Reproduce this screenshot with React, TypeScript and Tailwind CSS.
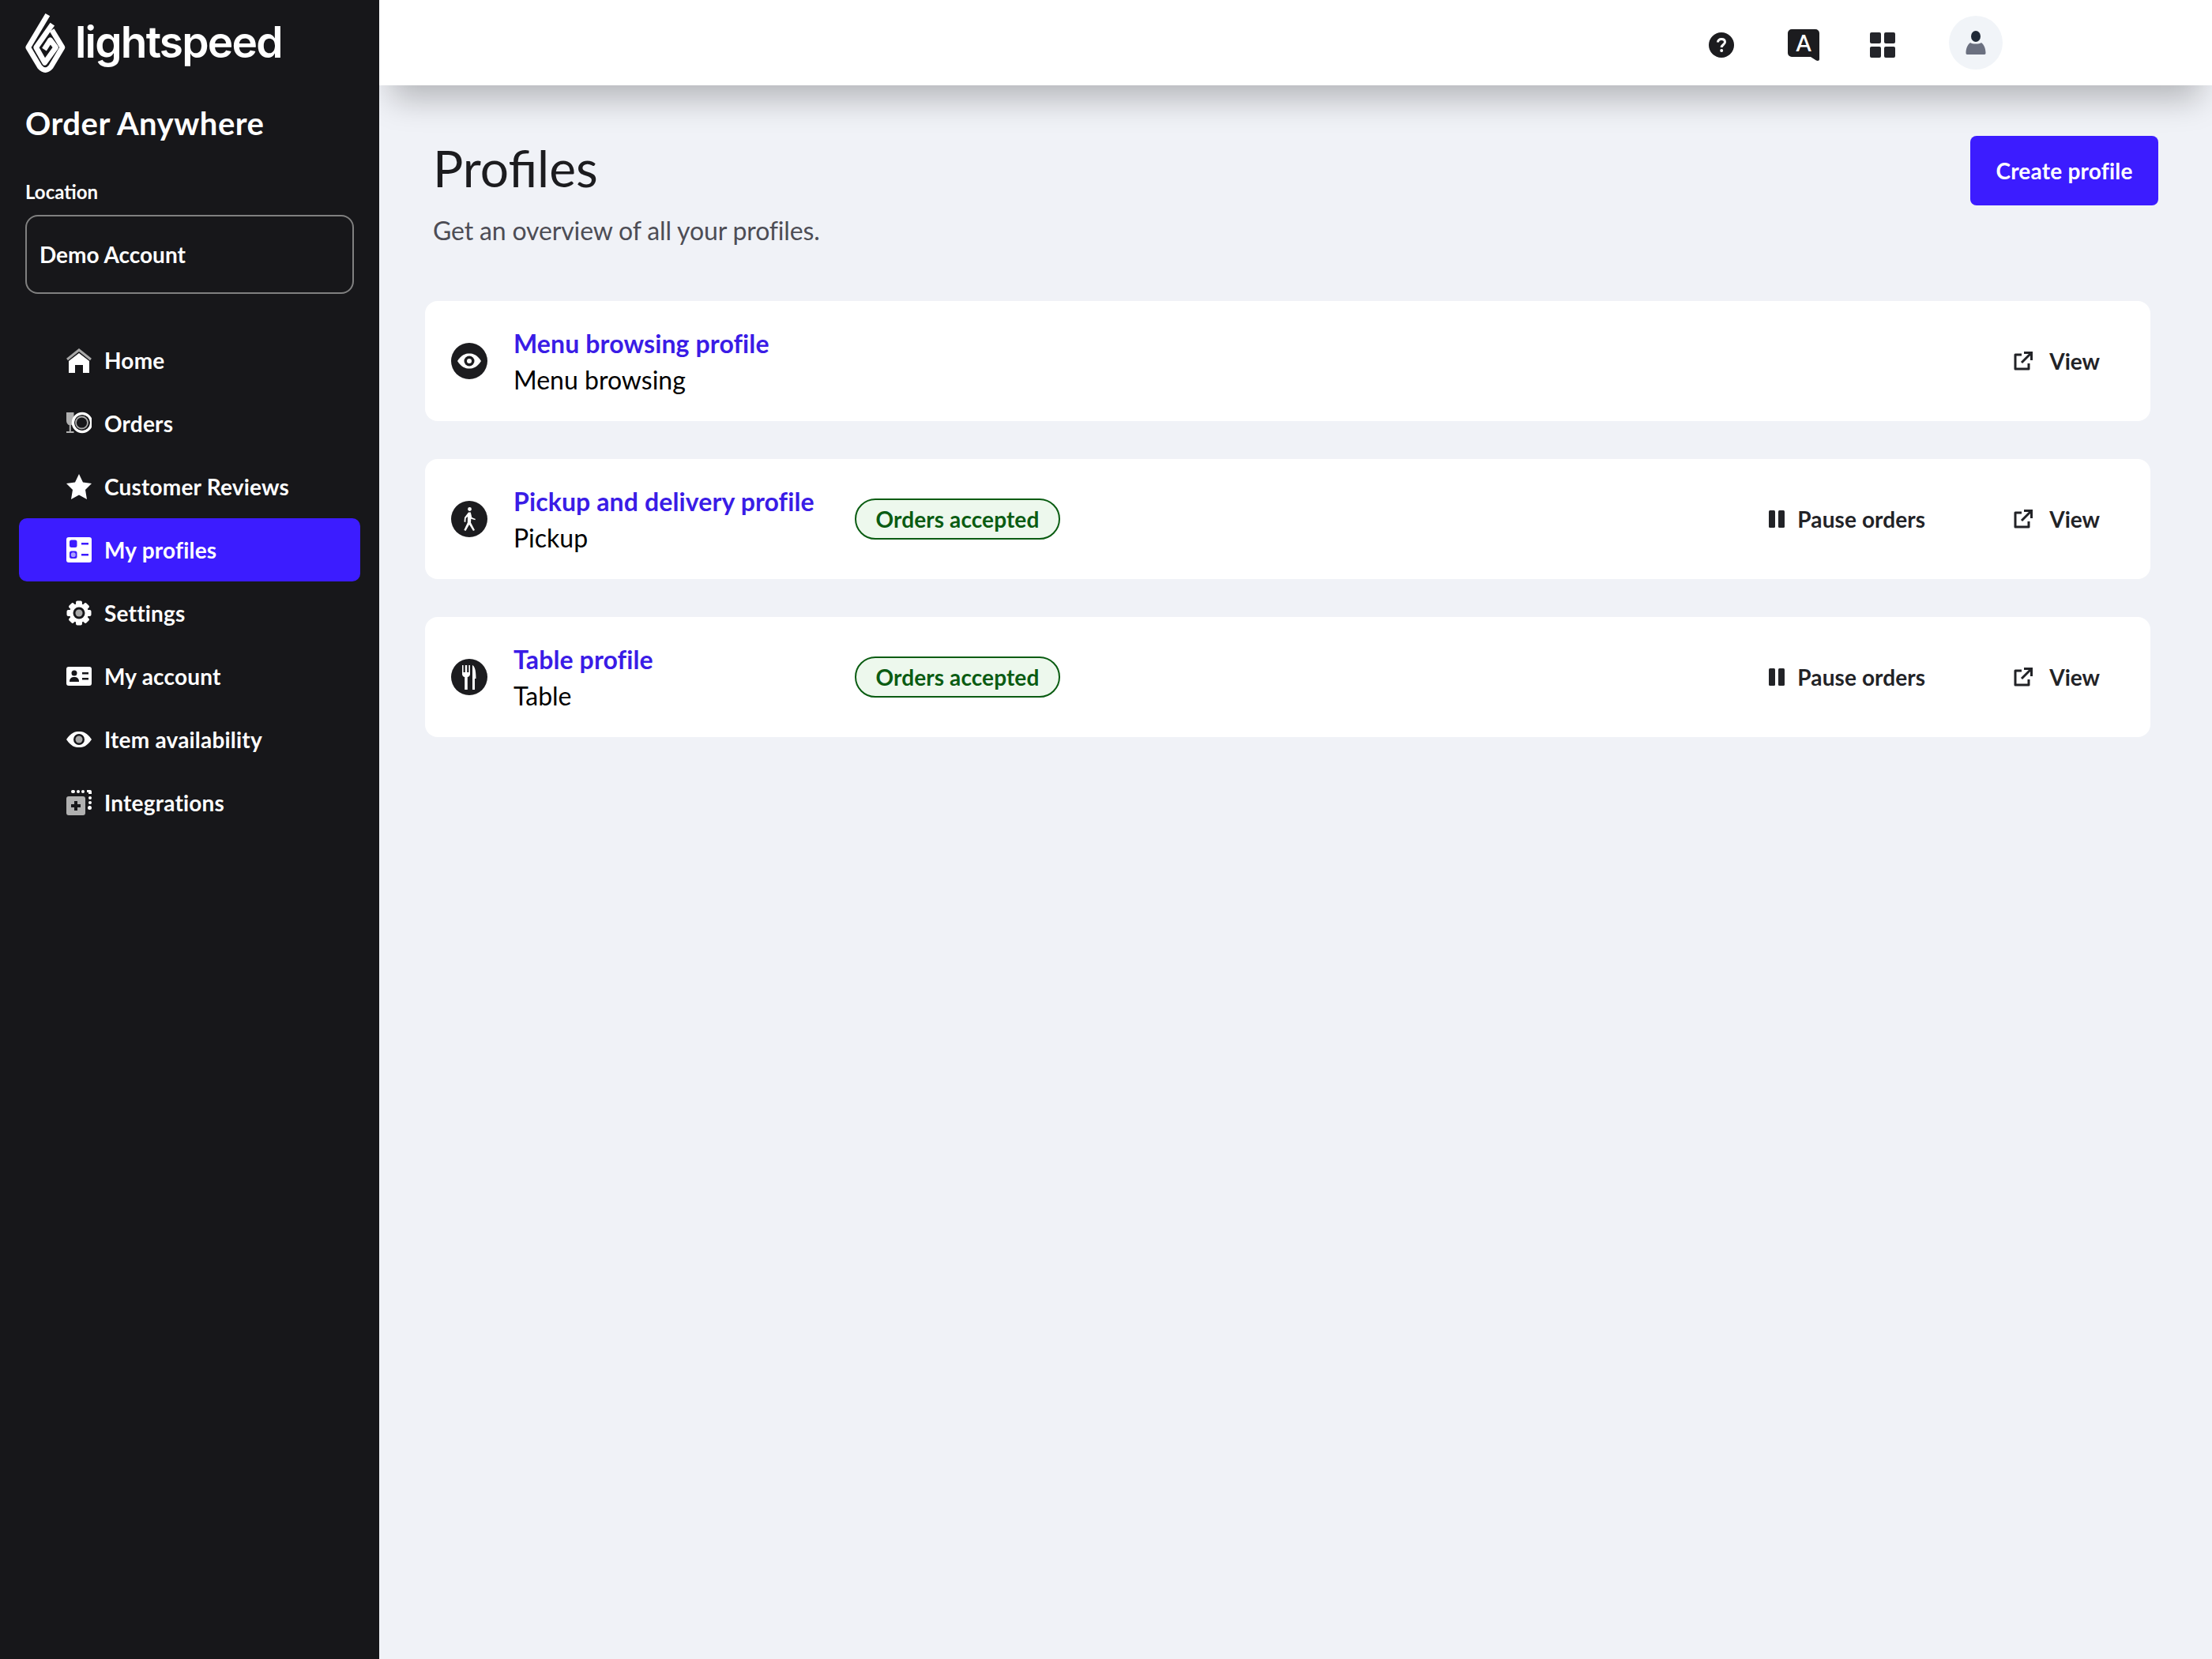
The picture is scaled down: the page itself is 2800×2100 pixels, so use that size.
import React from "react";

const Lato = "font-['Lato',sans-serif]";

function Logo() {
  return (
    <svg width="70" height="90" viewBox="0 0 210 270" className="shrink-0">
      <g fill="none" stroke="#fff" strokeWidth="20" strokeLinejoin="round" strokeLinecap="butt">
        <path d="M106 26 L32 150 L76 224 Q97 248 118 224 L162 150 L122 84" />
        <path d="M124 62 L62 150 L95 208 L137 150 L116 122 L93 158" />
      </g>
    </svg>
  );
}

function HomeIcon() {
  return (
    <svg width="32" height="32" viewBox="0 0 32 32">
      <path d="M1 15 L16 3 L31 15" fill="none" stroke="#a8a8a8" strokeWidth="3" />
      <path d="M16 7 L29 17 V32 H21 V22 H11 V32 H3 V17 Z" fill="#fff" />
    </svg>
  );
}
function OrdersIcon() {
  return (
    <svg width="32" height="32" viewBox="0 0 32 32">
      <path d="M0 2 H9.5 V12 C9.5 16 7 18 5.8 18 V26 H9.5 V28 H0 V26 H3.8 V18 C2.5 18 0 16 0 12 Z" fill="#b0b0b0" />
      <circle cx="20" cy="15" r="11.5" fill="none" stroke="#fff" strokeWidth="3.5" />
      <circle cx="20" cy="15" r="9.8" fill="#17171a" />
      <circle cx="19.5" cy="15" r="7.5" fill="#17171a" stroke="#a8a8a8" strokeWidth="1.8" />
    </svg>
  );
}
function StarIcon() {
  return (
    <svg width="32" height="32" viewBox="0 0 32 32">
      <path d="M16 0 L21 10.5 L32 12 L24 20 L26 32 L16 26.5 L6 32 L8 20 L0 12 L11 10.5 Z" fill="#fff" strokeLinejoin="round" />
    </svg>
  );
}
function ProfilesIcon() {
  return (
    <svg width="32" height="32" viewBox="0 0 32 32">
      <rect width="32" height="32" rx="3" fill="#fff" />
      <rect x="4" y="3.5" width="9.5" height="9.5" rx="2.5" fill="#3c1cff" />
      <rect x="4" y="17.5" width="9.5" height="9.5" rx="2.5" fill="#3c1cff" />
      <circle cx="8.75" cy="22.25" r="3" fill="#a9a0ff" />
      <rect x="19" y="7" width="9" height="2.5" fill="#3c1cff" />
      <rect x="19" y="21" width="9" height="2.5" fill="#3c1cff" />
    </svg>
  );
}
function GearIcon() {
  const rot = [0, 45, 90, 135];
  return (
    <svg width="32" height="32" viewBox="0 0 32 32">
      {rot.map((r) => (
        <rect key={r} x="12" y="0.5" width="8" height="31" rx="2" fill="#fff" transform={`rotate(${r} 16 16)`} />
      ))}
      <circle cx="16" cy="16" r="12" fill="#fff" />
      <circle cx="16" cy="16" r="7.5" fill="#17171a" />
      <circle cx="16" cy="16" r="4.5" fill="#a8a8a8" />
    </svg>
  );
}
function AccountIcon() {
  return (
    <svg width="32" height="32" viewBox="0 0 32 32">
      <rect x="0" y="4" width="32" height="24" rx="3" fill="#fff" />
      <circle cx="10" cy="12" r="3.5" fill="#17171a" />
      <path d="M4 23 C4 18 7 17 10 17 C13 17 16 18 16 23 Z" fill="#17171a" />
      <rect x="20" y="11" width="8" height="2.5" fill="#17171a" />
      <rect x="20" y="18" width="8" height="2.5" fill="#17171a" />
    </svg>
  );
}
function EyeIcon() {
  return (
    <svg width="32" height="32" viewBox="0 0 32 32">
      <path d="M0 16 C6 7 11 6 16 6 C21 6 26 7 32 16 C26 25 21 26 16 26 C11 26 6 25 0 16 Z" fill="#fff" />
      <circle cx="16" cy="16" r="7" fill="#17171a" />
      <circle cx="16" cy="16" r="4.5" fill="#a8a8a8" />
    </svg>
  );
}
function IntegrationsIcon() {
  return (
    <svg width="32" height="32" viewBox="0 0 32 32">
      <rect x="0" y="8" width="24" height="24" rx="3" fill="#b0b0b0" />
      <path d="M10 14 H14 V18 H18 V22 H14 V26 H10 V22 H6 V18 H10 Z" fill="#17171a" />
      <g fill="#fff">
        <rect x="6" y="0" width="5" height="4" rx="2" />
        <rect x="13" y="0" width="4" height="4" rx="2" />
        <rect x="19" y="0" width="4" height="4" rx="2" />
        <path d="M26 0 H30 A2 2 0 0 1 32 2 V5 H28 V3 H26 Z" />
        <rect x="28" y="8" width="4" height="4" rx="2" />
        <rect x="28" y="14" width="4" height="4" rx="2" />
        <rect x="27" y="20" width="5" height="5" rx="2.5" />
      </g>
    </svg>
  );
}

function Question() {
  return (
    <svg width="32" height="32" viewBox="0 0 32 32">
      <circle cx="16" cy="16" r="16" fill="#1c1c1f" />
      <path d="M11.5 12.5 C11.5 10 13.5 8.5 16 8.5 C18.7 8.5 20.5 10 20.5 12.3 C20.5 15.5 16.2 15.5 16.2 19" fill="none" stroke="#fff" strokeWidth="3" />
      <circle cx="16.2" cy="23" r="2" fill="#fff" />
    </svg>
  );
}
function LangIcon() {
  return (
    <div className="relative w-[40px] h-[40px]">
      <svg width="40" height="40" viewBox="0 0 40 40" className="absolute inset-0">
        <path d="M5 0 H35 A5 5 0 0 1 40 5 V38 C40 40 38 40.5 36 39.5 L29 35 H5 A5 5 0 0 1 0 30 V5 A5 5 0 0 1 5 0 Z" fill="#1c1c1f" />
      </svg>
      <span className={`absolute inset-x-0 top-[-1px] text-center text-[28px] leading-[36px] font-semibold text-white ${Lato}`}>A</span>
    </div>
  );
}
function Grid4() {
  return (
    <div className="grid grid-cols-2 grid-rows-2 gap-[4px] w-[32px] h-[32px]">
      <div className="bg-[#24252a] rounded-[2px]" />
      <div className="bg-[#24252a] rounded-[2px]" />
      <div className="bg-[#24252a] rounded-[2px]" />
      <div className="bg-[#24252a] rounded-[2px]" />
    </div>
  );
}
function Person() {
  return (
    <svg width="26" height="30" viewBox="0 0 26 30">
      <ellipse cx="13" cy="7" rx="6" ry="7" fill="#1f2937" />
      <path d="M6 15 C9 17 17 17 20 15 C23 17 25.5 22 25.5 28 C25.5 29 25 30 24 30 H2 C1 30 0.5 29 0.5 28 C0.5 22 3 17 6 15 Z" fill="#6b7080" />
    </svg>
  );
}

function RoundWalk() {
  return (
    <svg width="46" height="46" viewBox="0 0 46 46">
      <circle cx="23" cy="23" r="23" fill="#1c1c1f" />
      <circle cx="23.5" cy="10.5" r="2.4" fill="#fff" />
      <path d="M22 14.5 H24.8 L26.3 21 L31 23 L30.3 24.3 L25.3 22.8 L25 27.5 L30 37 L28 38 L23 30 L18.5 38 L16.3 37 L20.8 27.5 L21 20 L18.7 22 L18.3 27 L16.5 26.5 L17 21 Z" fill="#fff" />
    </svg>
  );
}
function RoundEye() {
  return (
    <svg width="46" height="46" viewBox="0 0 46 46">
      <circle cx="23" cy="23" r="23" fill="#1c1c1f" />
      <path d="M8 23 C13 15 18 13.5 23 13.5 C28 13.5 33 15 38 23 C33 31 28 32.5 23 32.5 C18 32.5 13 31 8 23 Z" fill="#fff" />
      <circle cx="23" cy="23" r="6.5" fill="#1c1c1f" />
      <circle cx="23" cy="23" r="3" fill="#fff" />
    </svg>
  );
}
function RoundFork() {
  return (
    <svg width="46" height="46" viewBox="0 0 46 46">
      <circle cx="23" cy="23" r="23" fill="#1c1c1f" />
      <path d="M14 8 H15.6 V17 H17.8 V8 H20.2 V17 H22.4 V8 H24 V19 C24 22 21.5 23 20.8 23 V39 H17.2 V23 C16.5 23 14 22 14 19 Z" fill="#fff" />
      <path d="M27 8 C29.5 9 31.5 13 31.5 25 H30 V39 H27 Z" fill="#fff" />
    </svg>
  );
}

function PauseIcon() {
  return (
    <svg width="20" height="22" viewBox="0 0 20 22" className="shrink-0">
      <rect x="0" y="0" width="8" height="22" rx="1.5" fill="#222327" />
      <rect x="12" y="0" width="8" height="22" rx="1.5" fill="#222327" />
    </svg>
  );
}
function ExternalIcon() {
  return (
    <svg width="24" height="24" viewBox="0 0 24 24" className="shrink-0" fill="none" stroke="#222327" strokeWidth="3">
      <path d="M10 4 H2 V22 H19 V15" strokeLinejoin="round" />
      <path d="M10 14 L22 2 M13 1.5 H22.5 V11" />
    </svg>
  );
}

const nav = [
  { label: "Home", icon: <HomeIcon /> },
  { label: "Orders", icon: <OrdersIcon /> },
  { label: "Customer Reviews", icon: <StarIcon /> },
  { label: "My profiles", icon: <ProfilesIcon />, active: true },
  { label: "Settings", icon: <GearIcon /> },
  { label: "My account", icon: <AccountIcon /> },
  { label: "Item availability", icon: <EyeIcon /> },
  { label: "Integrations", icon: <IntegrationsIcon /> },
];

const profiles = [
  { title: "Menu browsing profile", sub: "Menu browsing", icon: <RoundEye />, live: false },
  { title: "Pickup and delivery profile", sub: "Pickup", icon: <RoundWalk />, live: true },
  { title: "Table profile", sub: "Table", icon: <RoundFork />, live: true },
];

export default function App() {
  return (
    <div className={`flex w-full h-screen bg-[#f0f2f7] overflow-hidden ${Lato}`}>
      <aside className="relative z-20 w-[480px] shrink-0 h-full bg-[#17171a] text-white">
        <div className="flex items-start pl-[25px] pt-[10px] h-[108px]">
          <Logo />
          <span className="mt-[7px] font-['Inter',sans-serif] text-[55px] leading-[72px] font-semibold tracking-[-1.8px]">lightspeed</span>
        </div>
        <h2 className="pl-[32px] mt-[24px] text-[40px] leading-[48px] font-bold tracking-[0.5px]">Order Anywhere</h2>
        <div className="pl-[32px] mt-[47px] text-[24px] leading-[32px] font-bold">Location</div>
        <div className="ml-[32px] mt-[13px] w-[416px] h-[100px] flex items-center pl-[16px] border-2 border-[#808080] rounded-[16px] text-[28px] font-bold">
          Demo Account
        </div>
        <nav className="mt-[44px] ml-[24px] w-[432px] flex flex-col">
          {nav.map((n) => (
            <div
              key={n.label}
              className={`h-[80px] flex items-center pl-[60px] gap-[16px] rounded-[10px] text-[28px] font-bold tracking-[0.2px] ${n.active ? "bg-[#3c1cff]" : ""}`}
            >
              {n.icon}
              <span>{n.label}</span>
            </div>
          ))}
        </nav>
      </aside>

      <div className="flex-1 min-w-0 flex flex-col">
        <header className="relative z-10 h-[108px] shrink-0 bg-white flex items-center pl-[1683px] shadow-[0_32px_40px_-15px_rgba(0,0,0,0.25)]">
          <div className="mt-[6px]"><Question /></div>
          <div className="ml-[68px] mt-[6px]"><LangIcon /></div>
          <div className="ml-[64px] mt-[6px]"><Grid4 /></div>
          <div className="ml-[68px] w-[68px] h-[68px] rounded-full bg-[#f1f4f8] flex items-center justify-center">
            <Person />
          </div>
        </header>

        <main className="flex-1 pl-[58px] pr-[78px]">
          <div className="flex justify-between items-start">
            <div className="pl-[10px] pt-[69px]">
              <h1 className="text-[64px] leading-[72px] text-[#1c1c1f] font-normal">Profiles</h1>
              <p className="mt-[23px] text-[32px] leading-[40px] text-[#4d4d55] tracking-[-0.15px]">Get an overview of all your profiles.</p>
            </div>
            <button className="mt-[64px] -mr-[10px] w-[238px] h-[88px] rounded-[8px] bg-[#3c1cff] text-white text-[28px] font-bold tracking-[0.2px]">
              Create profile
            </button>
          </div>

          <div className="mt-[69px] flex flex-col gap-[48px]">
            {profiles.map((p) => (
              <div key={p.title} className="h-[152px] bg-white rounded-[16px] flex items-center pl-[33px] pr-[64px]">
                {p.icon}
                <div className="ml-[33px] w-[432px] pt-[2px]">
                  <div className="text-[32px] leading-[46px] font-bold text-[#3a1ce6] tracking-[0.12px]">{p.title}</div>
                  <div className="text-[32px] leading-[46px] text-black">{p.sub}</div>
                </div>
                {p.live && (
                  <div className="w-[260px] h-[52px] flex items-center justify-center rounded-full border-2 border-[#0a5c12] bg-[#edf8ed] text-[#0a5c12] text-[28px] font-bold tracking-[0.1px]">
                    Orders accepted
                  </div>
                )}
                <div className="ml-auto flex items-center text-[28px] font-bold text-[#222327]">
                  {p.live && (
                    <div className="flex items-center gap-[16px] mr-[112px]">
                      <PauseIcon />
                      <span className="tracking-[0.1px]">Pause orders</span>
                    </div>
                  )}
                  <div className="flex items-center gap-[21px]">
                    <ExternalIcon />
                    <span>View</span>
                  </div>
                </div>
              </div>
            ))}
          </div>
        </main>
      </div>
    </div>
  );
}
